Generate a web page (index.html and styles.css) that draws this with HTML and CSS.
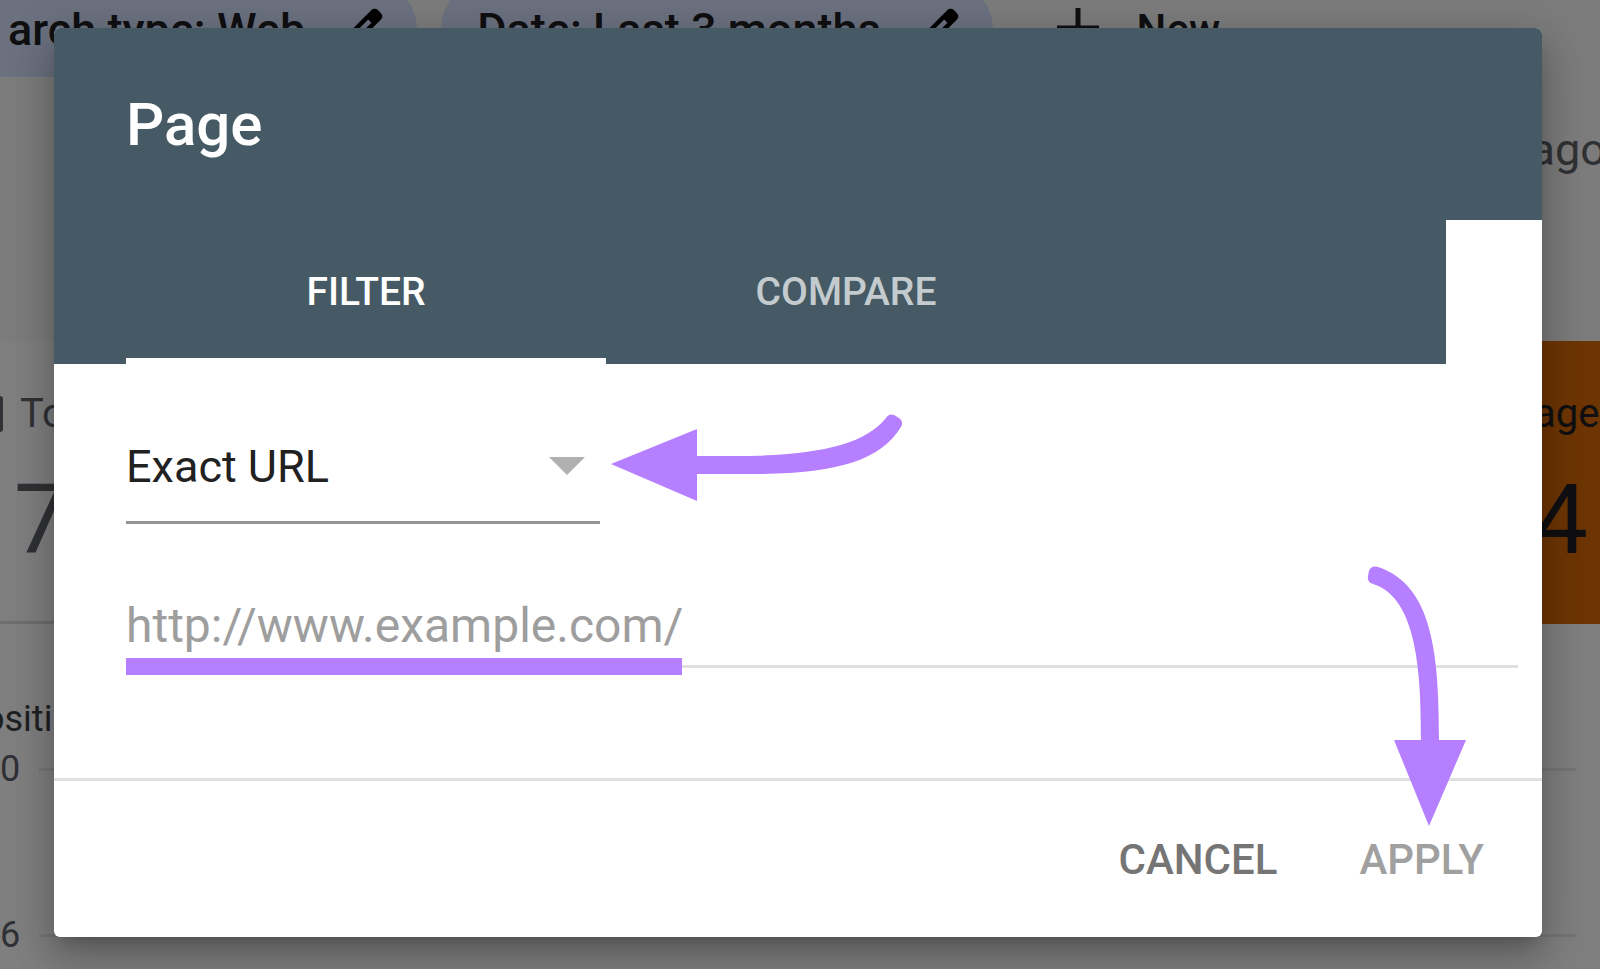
FILE: index.html
```html
<!DOCTYPE html>
<html lang="en">
<head>
  <meta charset="UTF-8">
  <meta name="viewport" content="width=device-width, initial-scale=1.0">
  <title>Page filter</title>
  <link rel="stylesheet" href="styles.css">
</head>
<body>
<!-- report behind the dialog -->
<div class="report">
    <div class="filters">
        <div class="chip">
            arch type: Web
            <svg class="pen" viewBox="0 -960 960 960"><path d="M200-200h57l391-391-57-57-391 391v57Zm-80 80v-170l528-527q12-11 26.5-17t30.5-6q16 0 31 6t26 18l55 56q12 11 17.5 26t5.5 30q0 16-5.5 30.5T817-647L290-120H120Zm640-584-56-56 56 56Zm-141 85-28-29 57 57-29-28Z"/></svg>
        </div>
        <div class="chip">
            Date: Last 3 months
            <svg class="pen" viewBox="0 -960 960 960"><path d="M200-200h57l391-391-57-57-391 391v57Zm-80 80v-170l528-527q12-11 26.5-17t30.5-6q16 0 31 6t26 18l55 56q12 11 17.5 26t5.5 30q0 16-5.5 30.5T817-647L290-120H120Zm640-584-56-56 56 56Zm-141 85-28-29 57 57-29-28Z"/></svg>
        </div>
        <div class="new">
            <svg class="plus" viewBox="0 0 42 42"><path d="M21 0v42M0 20h42"/></svg>
            New
        </div>
    </div>
    <div class="updated">ago</div>
    <div class="metrics">
        <div class="metric">
            <div class="metric-label"><span class="box"></span>To</div>
            <div class="metric-value">7</div>
        </div>
        <div class="metric position">
            <div class="metric-label">age</div>
            <div class="metric-value">4</div>
        </div>
    </div>
    <div class="chart">
        <div class="axis-title">ositi</div>
        <div class="tick"><span>0</span></div>
        <div class="tick"><span>6</span></div>
    </div>
</div>

<div class="overlay">
    <form class="dialog" role="dialog" aria-labelledby="title">
        <div class="header">
            <h1 id="title">Page</h1>
        </div>
        <div class="tabs" role="tablist">
            <button type="button" class="tab active" role="tab" aria-selected="true">FILTER</button>
            <button type="button" class="tab" role="tab" aria-selected="false">COMPARE</button>
        </div>
        <div class="content">
            <div class="field match">
                <select aria-label="Match type">
                    <option>Exact URL</option>
                </select>
                <svg class="caret" viewBox="0 0 36 18"><path d="M0 0h36L18 18z"/></svg>
                <svg class="arrow arrow-left" viewBox="610 412 294 92">
                    <path d="M611 464L697 429V456H750C822 454 865 444 886 418Q889 413 894 415L899 418Q904 421 901 427C880 461 836 474 750 474H697V501Z"/>
                </svg>
            </div>
            <div class="field url">
                <input type="text" placeholder="http://www.example.com/" aria-label="Page URL">
                <span class="marker"></span>
            </div>
        </div>
        <div class="footer">
            <button type="button" class="action">CANCEL</button>
            <button type="submit" class="action" disabled>APPLY</button>
            <svg class="arrow arrow-down" viewBox="1366 564 102 264">
                <path d="M1429 826L1394 740H1421C1421 676 1418 598 1373 584Q1367 582 1368 576L1369 571Q1371 565 1378 567C1432 585 1439 652 1439 740H1466Z"/>
            </svg>
        </div>
    </form>
</div>
</body>
</html>
```
FILE: styles.css
```css
* {
    box-sizing: border-box;
}
body {
    margin: 0;
    font-family: Roboto, Arial, sans-serif;
    color: #202124;
}
button, input, select {
    font-family: inherit;
    margin: 0;
    border: 0;
    border-radius: 0;
    background: none;
}

/* report */
.report {
    height: 100vh;
    overflow: hidden;
    background-color: #f8f9fa;
}
.filters {
    display: flex;
    gap: 24px;
    margin: -19px 0 0 -48px;
    white-space: nowrap;
    font-size: 42px;
    font-weight: 500;
}
.chip {
    display: flex;
    align-items: center;
    gap: 30px;
    height: 96px;
    padding: 0 28px 0 36px;
    border-radius: 48px;
    background-color: #d7e3ff;
    font-size: 45px;
}
.chip:first-child {
    padding-left: 56px;
    border-radius: 0 48px 48px 0;
}
.pen {
    width: 54px;
    height: 54px;
}
.new {
    display: flex;
    align-items: center;
    gap: 38px;
    padding-left: 40px;
}
.plus {
    width: 42px;
    height: 42px;
    fill: none;
    stroke: #202124;
    stroke-width: 5;
}
.updated {
    height: 264px;
    padding-top: 43px;
    margin-right: -6px;
    text-align: right;
    font-size: 45px;
    line-height: 60px;
    color: #5f6368;
}
.metrics {
    display: flex;
    justify-content: space-between;
    height: 283px;
    background-color: #fff;
    border-bottom: 3px solid #dadce0;
}
.metric {
    padding-top: 49px;
    color: #5f6368;
}
.metric-label {
    display: flex;
    align-items: center;
    gap: 17px;
    font-size: 40px;
    line-height: 48px;
}
.metric-value {
    padding-left: 14px;
    font-size: 96px;
    line-height: 112px;
    margin-top: 26px;
}
.box {
    width: 3px;
    height: 36px;
    border-radius: 0 3px 3px 0;
    background-color: #5f6368;
}
.position {
    height: 283px;
    width: 66px;
    background-color: #dd6a08;
    color: #202124;
}
.position .metric-value {
    padding-left: 0;
}
.chart {
    height: 345px;
    background-color: #fff;
    font-size: 36px;
    line-height: 42px;
    color: #5f6368;
}
.axis-title {
    padding-top: 74px;
    margin-left: -16px;
    color: #3c4043;
}
.tick {
    display: flex;
    align-items: center;
    gap: 19px;
    height: 42px;
    margin: 8px 24px 124px 0;
}
.tick::after {
    content: "";
    flex: 1;
    height: 3px;
    background-color: #e8eaed;
}

/* dialog */
.overlay {
    position: absolute;
    inset: 0;
    padding: 28px 58px 32px 54px;
    background-color: rgba(0,0,0,0.5);
}
.dialog {
    background-color: #fff;
    border-radius: 6px;
    box-shadow: 0 11px 15px -7px rgba(0,0,0,0.2), 0 24px 38px 3px rgba(0,0,0,0.14), 0 9px 46px 8px rgba(0,0,0,0.12);
}
.header {
    display: flex;
    align-items: center;
    height: 192px;
    padding-left: 72px;
    border-radius: 6px 6px 0 0;
    background-color: #455a64;
    color: #fff;
}
h1 {
    margin: 0;
    font-size: 60px;
    font-weight: 500;
}
.tabs {
    display: flex;
    height: 144px;
    margin-right: 96px;
    padding-left: 72px;
    background-color: #455a64;
}
.tab {
    width: 480px;
    padding: 0;
    font-size: 39px;
    font-weight: 500;
    color: rgba(255,255,255,0.7);
}
.tab.active {
    color: #fff;
    box-shadow: inset 0 -6px #fff;
}
.content {
    padding: 48px 24px 110px 72px;
}
.field {
    position: relative;
}
.match {
    width: 474px;
    height: 112px;
}
.match select {
    appearance: none;
    width: 100%;
    height: 100%;
    padding: 0;
    font-size: 45px;
    color: #212121;
    border-bottom: 3px solid #949494;
}
.caret {
    position: absolute;
    top: 45px;
    right: 15px;
    width: 36px;
    height: 18px;
    fill: #b0b0b0;
    pointer-events: none;
}
.url {
    margin-top: 62px;
}
.url input {
    display: block;
    width: 100%;
    height: 82px;
    padding: 0;
    font-size: 48px;
    border-bottom: 3px solid #e0e0e0;
}
.url input::placeholder {
    color: #9e9e9e;
}
.footer {
    position: relative;
    display: flex;
    justify-content: flex-end;
    align-items: center;
    gap: 34px;
    height: 159px;
    padding-right: 34px;
    border-top: 3px solid #e0e0e0;
}
.action {
    padding: 24px;
    font-size: 42px;
    font-weight: 500;
    color: #757575;
}
.action:disabled {
    color: #a0a0a0;
}

/* purple annotations */
.arrow {
    position: absolute;
    fill: #b57fff;
    pointer-events: none;
}
.arrow-left {
    top: 0;
    left: 484px;
    width: 294px;
    height: 92px;
}
.arrow-down {
    right: 74px;
    bottom: 109px;
    width: 102px;
    height: 264px;
}
.marker {
    position: absolute;
    left: 0;
    bottom: -7px;
    width: 556px;
    height: 17px;
    background-color: #b57fff;
}
```
